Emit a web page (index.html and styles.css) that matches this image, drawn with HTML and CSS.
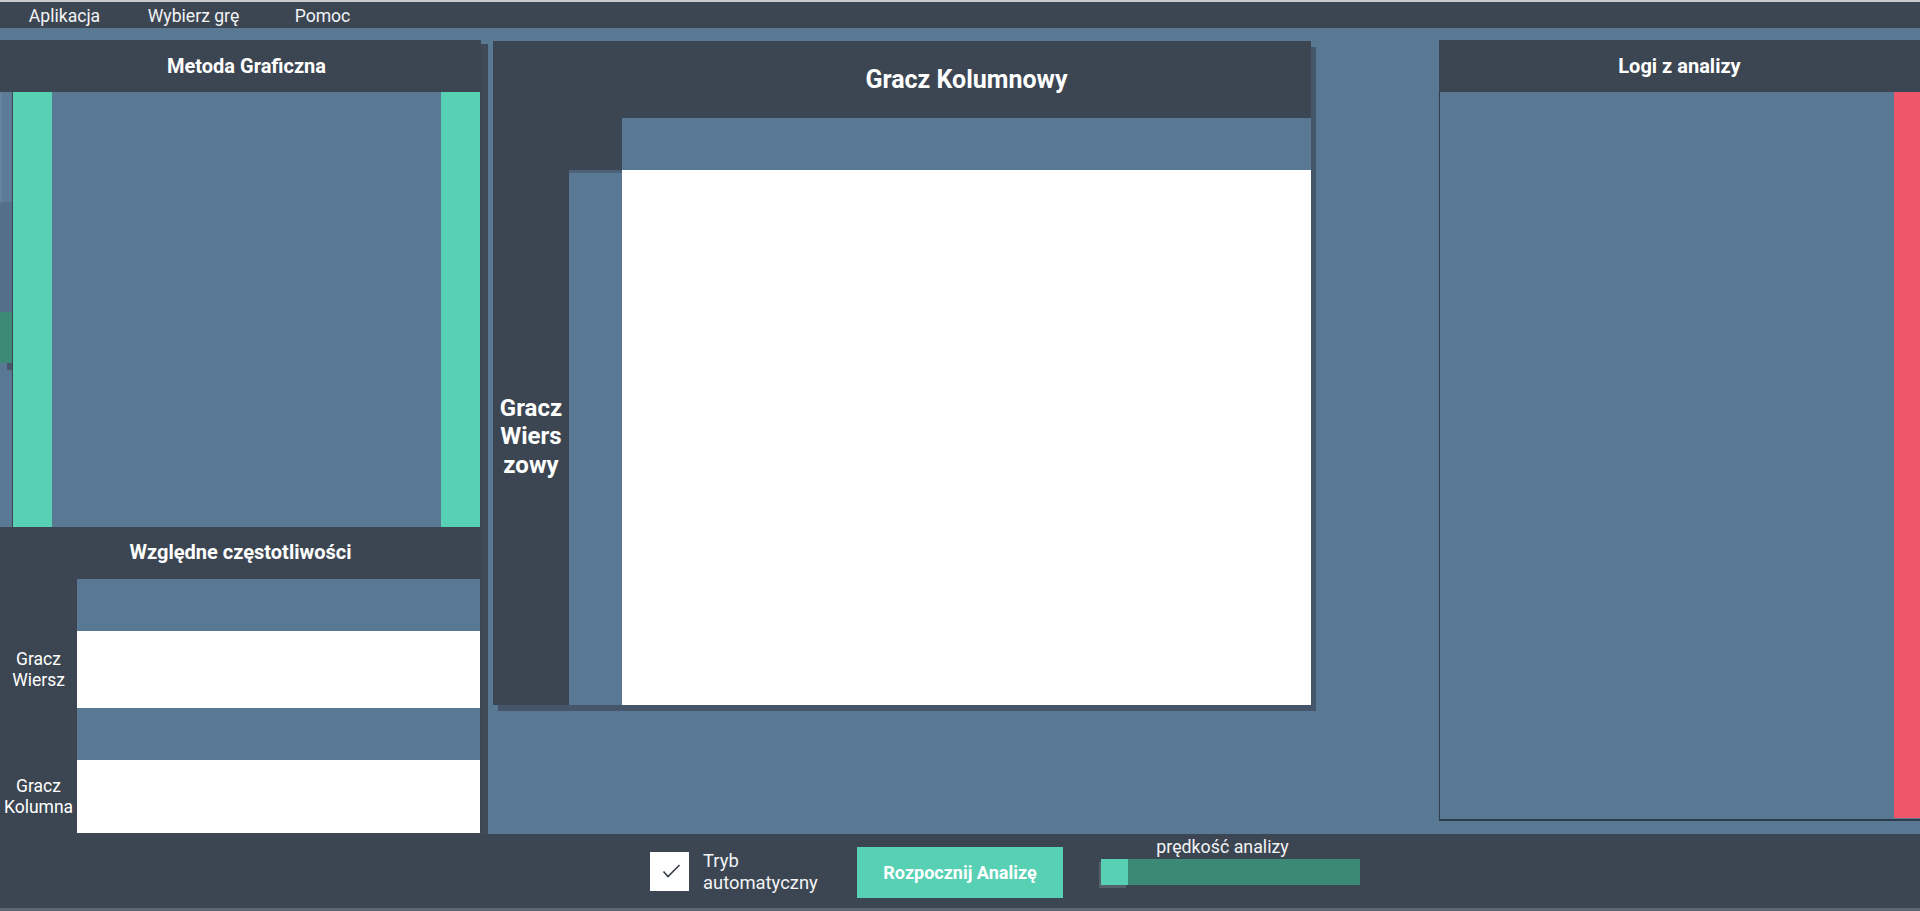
FILE: index.html
```html
<!DOCTYPE html>
<html lang="pl">
<head>
<meta charset="utf-8">
<title>Analiza gry</title>
<link rel="stylesheet" href="styles.css">
</head>
<body>
<div class="app">
  <nav class="menubar">
    <div class="menu-item">Aplikacja</div>
    <div class="menu-item">Wybierz grę</div>
    <div class="menu-item">Pomoc</div>
  </nav>
  <main class="workspace">
    <section class="left-panel">
      <header class="panel-title left-title">Metoda Graficzna</header>
      <div class="graph">
        <div class="graph-strip">
          <div class="strip-a"></div>
          <div class="strip-b"></div>
          <div class="strip-c"></div>
          <div class="strip-d"><span class="strip-mark"></span></div>
        </div>
        <div class="graph-line"></div>
        <div class="graph-bar"></div>
        <div class="graph-area"></div>
        <div class="graph-bar"></div>
      </div>
      <header class="section-title">Względne częstotliwości</header>
      <div class="freq">
        <div class="freq-label"></div><div class="freq-head freq-head-first"></div>
        <div class="freq-label">Gracz<br>Wiersz</div><div class="freq-row freq-row-first"></div>
        <div class="freq-label"></div><div class="freq-head"></div>
        <div class="freq-label">Gracz<br>Kolumna</div><div class="freq-row freq-row-last"></div>
      </div>
    </section>

    <section class="matrix-panel">
      <div class="matrix-title">Gracz Kolumnowy</div>
      <div class="matrix-colhead"></div>
      <div class="matrix-rowlabel">Gracz<br>Wiers<br>zowy</div>
      <div class="matrix-rowhead"></div>
      <div class="matrix-body"></div>
    </section>

    <section class="log-panel">
      <header class="panel-title">Logi z analizy</header>
      <div class="log-body">
        <div class="log-content"></div>
        <div class="log-scroll"></div>
      </div>
    </section>
  </main>
  <footer class="controls">
    <label class="auto-mode">
      <span class="checkbox">
        <svg width="39" height="39" viewBox="0 0 39 39"><path d="M13.5 19.5 L18 24.5 L29.5 13" fill="none" stroke="#3a3f45" stroke-width="1.6"/></svg>
      </span>
      <span class="auto-text">Tryb<br>automatyczny</span>
    </label>
    <button class="start-btn">Rozpocznij Analizę</button>
    <div class="speed">
      <div class="speed-label">prędkość analizy</div>
      <div class="speed-track"><span class="speed-handle"></span></div>
    </div>
  </footer>
</div>
</body>
</html>
```

FILE: styles.css
```css
* { box-sizing: border-box; }

html, body {
  margin: 0;
  padding: 0;
}

body {
  width: 1920px;
  height: 911px;
  overflow: hidden;
  background: #587893;
  font-family: Roboto, "Liberation Sans", sans-serif;
  color: #ffffff;
}

.app {
  display: flex;
  flex-direction: column;
  height: 911px;
}

/* Menu bar */
.menubar {
  display: flex;
  height: 28px;
  background: #3c4652;
  border-top: 2px solid #c9cbcd;
  flex: none;
}

.menu-item {
  width: 129px;
  text-align: center;
  font-size: 17.6px;
  line-height: 26px;
  padding-top: 1px;
  color: #f2f4f6;
}

/* Workspace */
.workspace {
  display: flex;
  height: 806px;
  flex: none;
  align-items: flex-start;
}

.panel-title {
  height: 52px;
  display: flex;
  align-items: center;
  justify-content: center;
  font-size: 20px;
  font-weight: 700;
  background: #3c4652;
}

.left-title {
  padding-left: 12px;
}

/* Left panel */
.left-panel {
  width: 481px;
  margin-top: 12px;
  height: 794px;
  background: #3c4652;
  box-shadow: 7px 4px 0 #3f4a58;
  display: flex;
  flex-direction: column;
  flex: none;
}

.graph {
  display: flex;
  height: 435px;
  background: #3c4652;
}

.graph-strip {
  width: 12px;
  display: flex;
  flex-direction: column;
}

.strip-a { height: 110px; background: #5b7b97; border-left: 2px solid #6583a0; }
.strip-b { height: 110px; background: #536f8a; }
.strip-c { height: 51px; background: #3d8a78; }
.strip-d { flex: 1; background: #587893; display: flex; justify-content: flex-end; align-items: flex-start; }
.strip-mark { width: 5px; height: 7px; background: #48586a; }

.graph-line { width: 1px; background: #3c4652; }
.graph-bar { width: 39px; background: #57d0b4; }
.graph-area { width: 389px; background: #587893; }

.section-title {
  height: 52px;
  display: flex;
  align-items: center;
  justify-content: center;
  font-size: 20px;
  font-weight: 700;
  padding-bottom: 2px;
}

.freq {
  display: grid;
  grid-template-columns: 77px 403px;
  grid-template-rows: 52px 77px 52px 73px;
}

.freq-label {
  display: flex;
  align-items: center;
  justify-content: center;
  text-align: center;
  font-size: 17.5px;
  line-height: 21px;
  padding-top: 1px;
}

.freq-head { background: #587893; }
.freq-row { background: #ffffff; }

/* Matrix panel */
.matrix-panel {
  margin-top: 13px;
  margin-left: 12px;
  width: 818px;
  height: 664px;
  flex: none;
  background: #3c4652;
  box-shadow: 5px 6px 0 #45566a;
  display: grid;
  grid-template-columns: 76px 53px 689px;
  grid-template-rows: 77px 52px 535px;
}

.matrix-title {
  grid-column: 3;
  grid-row: 1;
  display: flex;
  align-items: center;
  justify-content: center;
  font-size: 25px;
  font-weight: 700;
}

.matrix-colhead {
  grid-column: 3;
  grid-row: 2;
  background: #587893;
}

.matrix-rowlabel {
  grid-column: 1;
  grid-row: 3;
  display: flex;
  align-items: center;
  justify-content: center;
  text-align: center;
  font-size: 24px;
  font-weight: 700;
  line-height: 28.5px;
  padding-bottom: 2px;
}

.matrix-rowhead {
  grid-column: 2;
  grid-row: 3;
  background: #587893;
  border-top: 3px solid #4c6177;
}

.matrix-body {
  grid-column: 3;
  grid-row: 3;
  background: #ffffff;
}

/* Log panel */
.log-panel {
  margin-top: 12px;
  margin-left: 128px;
  width: 481px;
  flex: none;
  display: flex;
  flex-direction: column;
}

.log-body {
  height: 729px;
  display: flex;
  border-left: 1px solid #2d3d4e;
  border-bottom: 2px solid #2d3d4e;
  background: #587893;
}

.log-content { flex: 1; }

.log-scroll {
  width: 26px;
  height: 726px;
  background: #f0566a;
}

/* Bottom controls */
.controls {
  flex: 1;
  display: flex;
  align-items: center;
  background: #3c4652;
  border-bottom: 3px solid #5d6772;
  padding-left: 650px;
}

.auto-mode {
  display: flex;
  align-items: center;
  width: 207px;
  margin-top: 1px;
}

.checkbox {
  width: 39px;
  height: 39px;
  background: #ffffff;
  display: block;
  flex: none;
}

.checkbox svg { display: block; }

.auto-text {
  margin-left: 14px;
  font-size: 18.4px;
  line-height: 22px;
  color: #f2f4f6;
  padding-top: 0;
}

.start-btn {
  width: 206px;
  height: 51px;
  border: none;
  background: #57d0b4;
  color: #ffffff;
  font-family: Roboto, "Liberation Sans", sans-serif;
  font-size: 18px;
  font-weight: 700;
  padding: 0;
  margin-top: 2px;
}

.speed {
  margin-left: 38px;
  width: 259px;
  align-self: flex-start;
  margin-top: 3px;
}

.speed-label {
  font-size: 17.8px;
  line-height: 20px;
  text-align: center;
  padding-right: 16px;
  color: #f2f4f6;
}

.speed-track {
  margin-top: 2px;
  height: 26px;
  background: #3b8a78;
  display: flex;
}

.speed-handle {
  width: 27px;
  height: 26px;
  background: #57d0b4;
  box-shadow: -2px 3px 0 #56606b;
}
```
